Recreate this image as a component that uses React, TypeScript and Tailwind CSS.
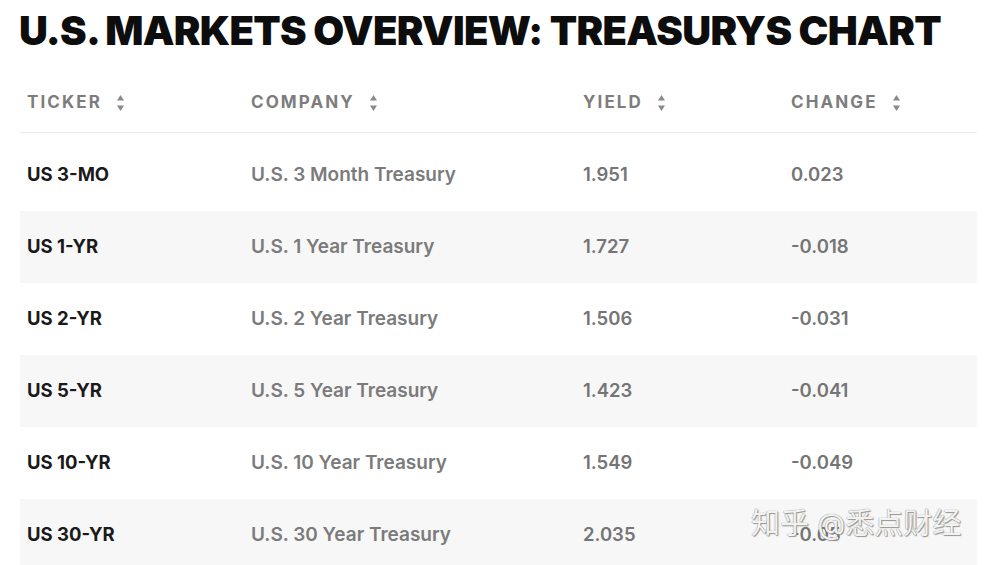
import React from "react";

const rows = [
  { ticker: "US 3-MO", company: "U.S. 3 Month Treasury", yld: "1.951", change: "0.023" },
  { ticker: "US 1-YR", company: "U.S. 1 Year Treasury", yld: "1.727", change: "-0.018" },
  { ticker: "US 2-YR", company: "U.S. 2 Year Treasury", yld: "1.506", change: "-0.031" },
  { ticker: "US 5-YR", company: "U.S. 5 Year Treasury", yld: "1.423", change: "-0.041" },
  { ticker: "US 10-YR", company: "U.S. 10 Year Treasury", yld: "1.549", change: "-0.049" },
  { ticker: "US 30-YR", company: "U.S. 30 Year Treasury", yld: "2.035", change: "-0.05" },
];

function SortIcon() {
  return (
    <svg width="9" height="18" viewBox="0 0 9 18" className="ml-[14px] shrink-0">
      <path d="M4.5 1 L8 6.5 H1 Z" fill="#8a8a8a" />
      <path d="M4.5 17 L8 11.5 H1 Z" fill="#8a8a8a" />
    </svg>
  );
}

function HeaderCell({ label, className }: { label: string; className: string }) {
  return (
    <div className={`flex items-center px-[7px] ${className}`}>
      <span className="text-[17px] font-bold tracking-[2.1px] text-[#7d7d7d]">{label}</span>
      <SortIcon />
    </div>
  );
}

export default function App() {
  return (
    <div
      className="relative w-[984px] h-[565px] overflow-hidden bg-white"
      style={{ fontFamily: "Inter, 'Noto Sans CJK SC', sans-serif" }}
    >
      <h1 className="pl-[19px] pt-[11px] text-[40px] leading-none font-black tracking-[-0.7px] text-[#0d0d0d] h-[67px]">
        U.S. MARKETS OVERVIEW: TREASURYS CHART
      </h1>

      <div className="ml-[20px] w-[957px]">
        <div className="flex h-[66px] pt-[6px] items-center border-b border-[#ececec]">
          <HeaderCell label="TICKER" className="w-[224px]" />
          <HeaderCell label="COMPANY" className="w-[332px]" />
          <HeaderCell label="YIELD" className="w-[208px]" />
          <HeaderCell label="CHANGE" className="flex-1" />
        </div>
        <div className="h-[6px]" />
        {rows.map((r, i) => (
          <div
            key={r.ticker}
            className={`flex h-[72px] items-center ${i % 2 === 1 ? "bg-[#f7f7f7]" : "bg-white"}`}
          >
            <div className="w-[224px] px-[7px] text-[18.5px] font-bold text-[#1a1a1a]">{r.ticker}</div>
            <div className="w-[332px] px-[7px] text-[19px] font-semibold text-[#7b7b7b]">{r.company}</div>
            <div className="w-[208px] px-[7px] text-[18.5px] font-semibold text-[#757575]">{r.yld}</div>
            <div className="flex-1 px-[7px] text-[18.5px] font-semibold text-[#757575]">{r.change}</div>
          </div>
        ))}
      </div>

      <div className="absolute left-[751px] top-[509px] text-[29px] leading-none text-[#f2f2f2] [text-shadow:0_0_1px_#6b6b6b,1px_1px_1px_#9a9a9a] whitespace-nowrap">
        知乎 @悉点财经
      </div>
    </div>
  );
}
